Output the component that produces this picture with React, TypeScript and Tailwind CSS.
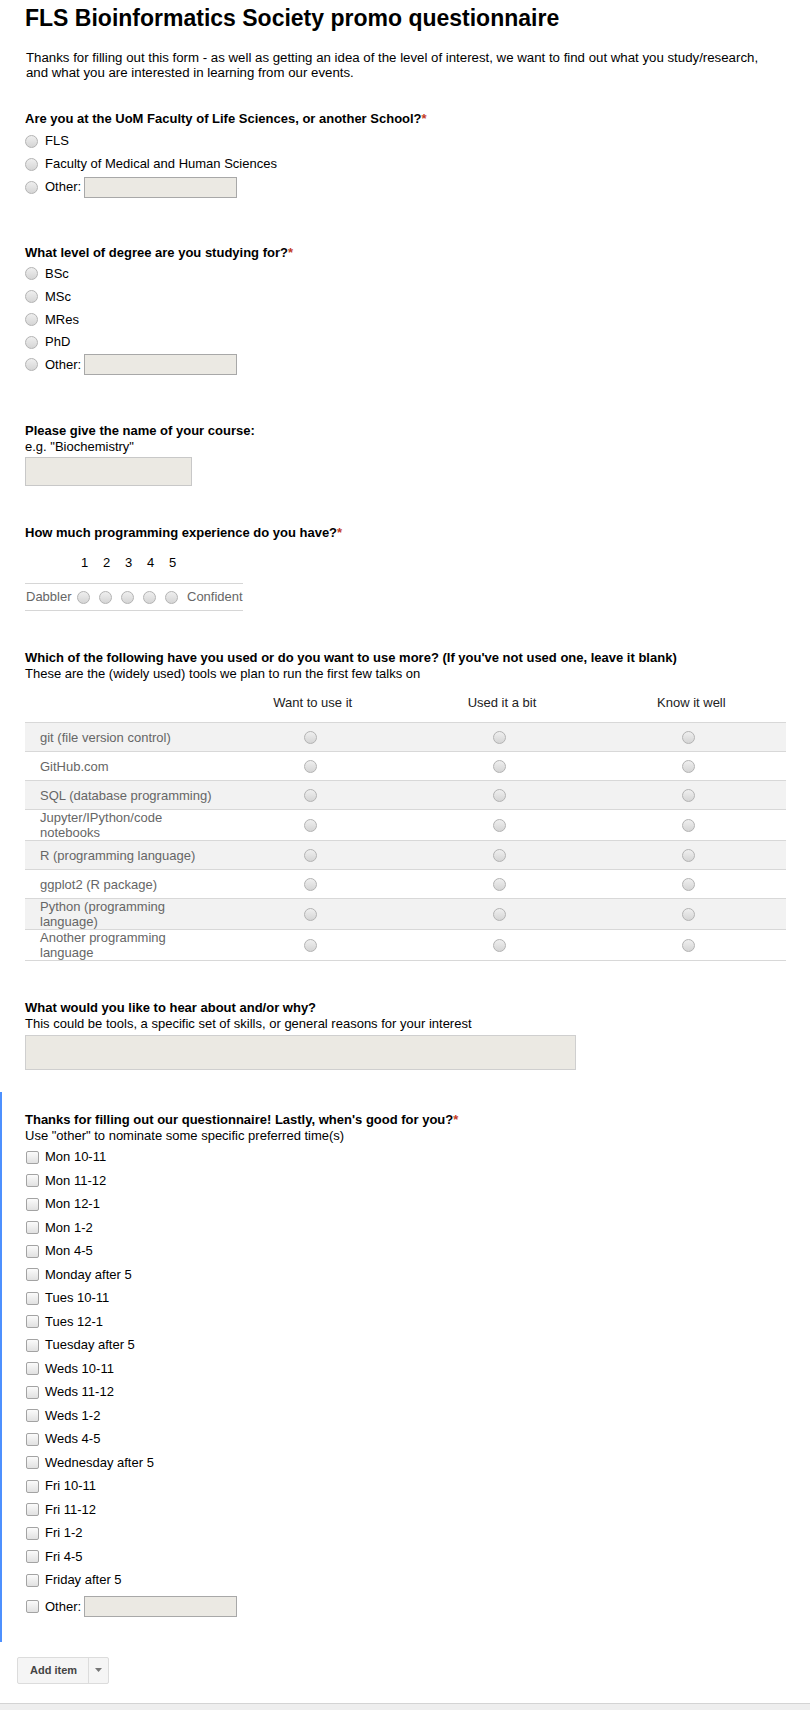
import React from 'react';

const radioCls =
  'inline-block w-[13px] h-[13px] rounded-full border border-[#b3b3b3] bg-linear-to-b from-[#efefef] to-[#d5d5d5]';

const Radio = () => <span className={radioCls} />;

const Checkbox = () => (
  <span className="inline-block w-[13px] h-[13px] rounded-[2px] border border-[#a3a3a3] bg-linear-to-b from-[#fbfbfb] to-[#e1e1e1]" />
);

const Req = () => <span className="text-[#c43b1d]">*</span>;

const OtherInput = () => (
  <span className="ml-[3px] inline-block w-[153px] h-[21px] border border-[#a8a8a8] bg-[#ebe9e3]" />
);

const schoolOptions = ['FLS', 'Faculty of Medical and Human Sciences'];
const degreeOptions = ['BSc', 'MSc', 'MRes', 'PhD'];

const tools = [
  'git (file version control)',
  'GitHub.com',
  'SQL (database programming)',
  'Jupyter/IPython/code notebooks',
  'R (programming language)',
  'ggplot2 (R package)',
  'Python (programming language)',
  'Another programming language',
];

const times = [
  'Mon 10-11',
  'Mon 11-12',
  'Mon 12-1',
  'Mon 1-2',
  'Mon 4-5',
  'Monday after 5',
  'Tues 10-11',
  'Tues 12-1',
  'Tuesday after 5',
  'Weds 10-11',
  'Weds 11-12',
  'Weds 1-2',
  'Weds 4-5',
  'Wednesday after 5',
  'Fri 10-11',
  'Fri 11-12',
  'Fri 1-2',
  'Fri 4-5',
  'Friday after 5',
];

export default function App() {
  return (
    <div className="w-[810px] h-[1710px] overflow-hidden bg-white text-black text-[13px] font-['Liberation_Sans',Arial,sans-serif]">
      <div className="px-[25px]">
        <h1 className="pt-[4px] text-[23px] leading-[28px] font-bold">
          FLS Bioinformatics Society promo questionnaire
        </h1>
        <p className="mt-[17.5px] pl-[1px] text-[13.25px] leading-[15px]">
          Thanks for filling out this form - as well as getting an idea of the level of interest, we want to find out
          what you study/research,
          <br />
          and what you are interested in learning from our events.
        </p>

        {/* school */}
        <div className="mt-[31.5px]">
          <div className="font-bold leading-[16px]">
            Are you at the UoM Faculty of Life Sciences, or another School?<Req />
          </div>
          <div className="mt-[2.5px]">
            {schoolOptions.map((o) => (
              <div key={o} className="flex items-center h-[23px]">
                <span className="w-[20px] flex">
                  <Radio />
                </span>
                {o}
              </div>
            ))}
            <div className="flex items-center h-[23px]">
              <span className="w-[20px] flex">
                <Radio />
              </span>
              Other:
              <OtherInput />
            </div>
          </div>
        </div>

        {/* degree */}
        <div className="mt-[46.5px]">
          <div className="font-bold leading-[16px]">
            What level of degree are you studying for?<Req />
          </div>
          <div className="mt-[1.5px]">
            {degreeOptions.map((o) => (
              <div key={o} className="flex items-center h-[22.75px]">
                <span className="w-[20px] flex">
                  <Radio />
                </span>
                {o}
              </div>
            ))}
            <div className="flex items-center h-[22.75px]">
              <span className="w-[20px] flex">
                <Radio />
              </span>
              Other:
              <OtherInput />
            </div>
          </div>
        </div>

        {/* course */}
        <div className="mt-[46.75px]">
          <div className="font-bold leading-[16px]">Please give the name of your course:</div>
          <div className="leading-[16px]">e.g. "Biochemistry"</div>
          <div className="mt-[2px] w-[167px] h-[29px] border border-[#c8c8c8] bg-[#ebe9e3]" />
        </div>

        {/* scale */}
        <div className="mt-[39px]">
          <div className="font-bold leading-[16px]">
            How much programming experience do you have?<Req />
          </div>
          <div className="mt-[12px] flex h-[20px] leading-[20px]">
            <span className="w-[47px]" />
            {[1, 2, 3, 4, 5].map((n) => (
              <span key={n} className="w-[22px] text-center pl-[3px]">
                {n}
              </span>
            ))}
          </div>
          <div className="mt-[10px] w-[218px] flex items-center h-[28px] border-y border-[#d6d6d6] text-[#666]">
            <span className="w-[47px] pl-[1px]">Dabbler</span>
            {[1, 2, 3, 4, 5].map((n) => (
              <span key={n} className="w-[22px] flex justify-center">
                <Radio />
              </span>
            ))}
            <span className="pl-[5px]">Confident</span>
          </div>
        </div>

        {/* grid */}
        <div className="mt-[39px]">
          <div className="font-bold leading-[16px]">
            Which of the following have you used or do you want to use more? (If you've not used one, leave it blank)
          </div>
          <div className="leading-[16px]">These are the (widely used) tools we plan to run the first few talks on</div>
          <div className="w-[761px]">
            <div className="flex h-[40px] pt-[13px] leading-[16px] text-[#222]">
              <span className="w-[193px]" />
              <span className="flex-1 text-center">Want to use it</span>
              <span className="flex-1 text-center">Used it a bit</span>
              <span className="flex-1 text-center">Know it well</span>
            </div>
            <div className="border-t border-[#d8d8d8]">
              {tools.map((t, i) => (
                <div
                  key={t}
                  className={`flex items-center min-h-[28px] box-content border-b border-[#d8d8d8] ${
                    i % 2 === 0 ? 'bg-[#f2f2f2]' : 'bg-white'
                  }`}
                >
                  <span className="w-[193px] pl-[15px] leading-[15px] text-[#666]">{t}</span>
                  {[0, 1, 2].map((c) => (
                    <span key={c} className="flex-1 flex justify-center pr-[5px]">
                      <Radio />
                    </span>
                  ))}
                </div>
              ))}
            </div>
          </div>
        </div>

        {/* free text */}
        <div className="mt-[39px]">
          <div className="font-bold leading-[16px]">What would you like to hear about and/or why?</div>
          <div className="leading-[15px]">
            This could be tools, a specific set of skills, or general reasons for your interest
          </div>
          <div className="mt-[4px] w-[551px] h-[35px] border border-[#cfcfcf] bg-[#ebe9e3]" />
        </div>
      </div>

      {/* selected item */}
      <div className="mt-[22px] border-l-[2px] border-[#4d90fe] pl-[23px] pt-[20px] pb-[21px]">
        <div className="font-bold leading-[16px]">
          Thanks for filling out our questionnaire! Lastly, when's good for you?<Req />
        </div>
        <div className="leading-[16px]">Use "other" to nominate some specific preferred time(s)</div>
        <div className="mt-[1.25px]">
          {times.map((t) => (
            <div key={t} className="flex items-center h-[23.5px]">
              <span className="w-[20px] flex pl-[1px]">
                <Checkbox />
              </span>
              {t}
            </div>
          ))}
          <div className="flex items-center h-[29px]">
            <span className="w-[20px] flex pl-[1px]">
              <Checkbox />
            </span>
            Other:
            <OtherInput />
          </div>
        </div>
      </div>

      {/* add item */}
      <div className="pl-[17px] mt-[15px]">
        <div className="inline-flex h-[27px] border border-[#dcdcdc] rounded-[2px] bg-[#f5f5f5] text-[11px] font-bold text-[#444]">
          <span className="flex items-center pl-[12px] pr-[11px] border-r border-[#dcdcdc]">Add item</span>
          <span className="flex items-center justify-center w-[19px]">
            <svg width="7" height="4" viewBox="0 0 7 4">
              <path d="M0 0h7L3.5 4z" fill="#777" />
            </svg>
          </span>
        </div>
      </div>

      <div className="mt-[19px] h-[7px] border-t border-[#d4d4d4] bg-[#eeeeee]" />
    </div>
  );
}
